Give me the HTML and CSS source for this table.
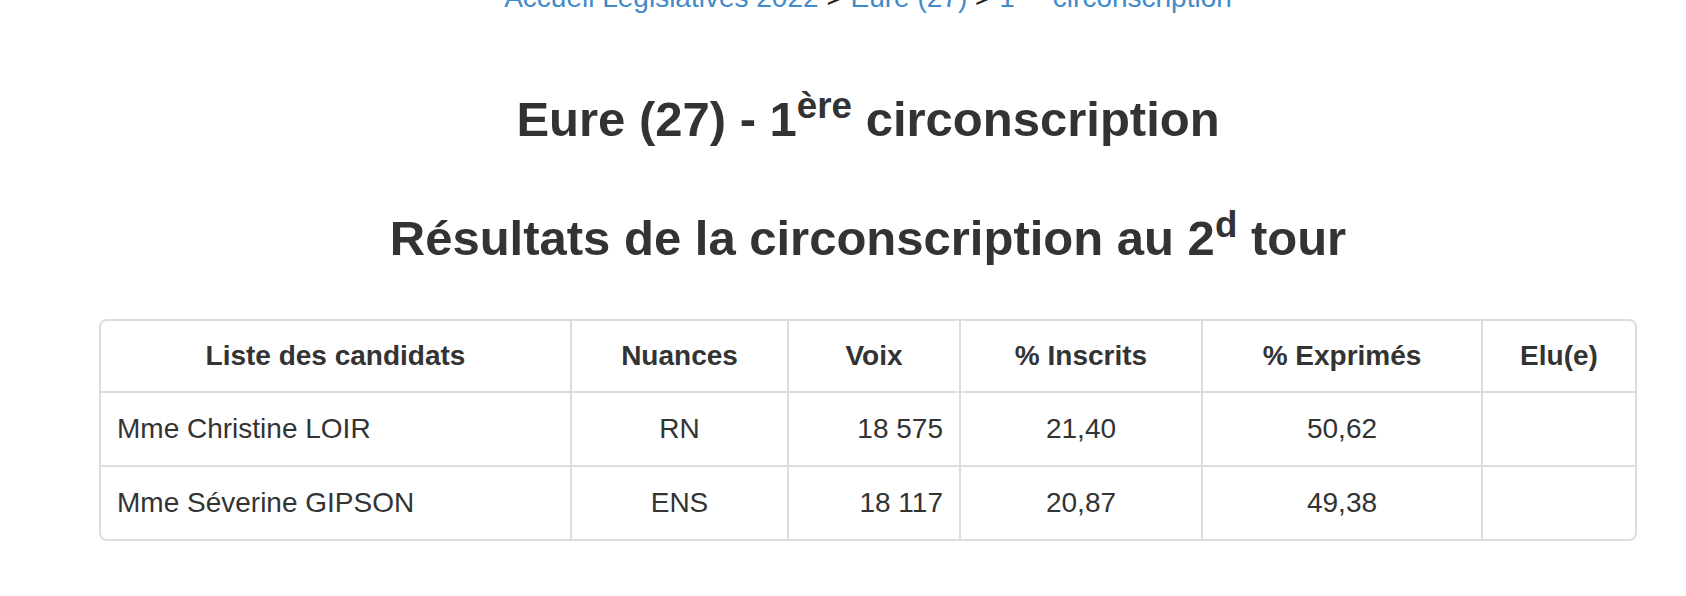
FILE: index.html
```html
<!DOCTYPE html>
<html lang="fr">
<head>
<meta charset="utf-8">
<title>Eure (27) - 1ère circonscription</title>
<link rel="stylesheet" href="styles.css">
</head>
<body>
<div class="page">
  <div class="breadcrumb">
    <a href="#">Accueil Législatives 2022</a>
    <span class="sep">&gt;</span>
    <a href="#">Eure (27)</a>
    <span class="sep">&gt;</span>
    <a href="#">1<sup>ère</sup> circonscription</a>
  </div>
  <h3 class="title">Eure (27) - 1<sup>ère</sup> circonscription</h3>
  <h2 class="subtitle">Résultats de la circonscription au 2<sup>d</sup> tour</h2>
  <div class="table-wrap">
    <table class="results">
      <colgroup>
        <col class="c-name">
        <col class="c-nuance">
        <col class="c-voix">
        <col class="c-ins">
        <col class="c-exp">
        <col class="c-elu">
      </colgroup>
      <thead>
        <tr>
          <th>Liste des candidats</th>
          <th>Nuances</th>
          <th>Voix</th>
          <th>% Inscrits</th>
          <th>% Exprimés</th>
          <th>Elu(e)</th>
        </tr>
      </thead>
      <tbody>
        <tr>
          <td class="left">Mme Christine LOIR</td>
          <td class="center">RN</td>
          <td class="right">18 575</td>
          <td class="center">21,40</td>
          <td class="center">50,62</td>
          <td class="center"></td>
        </tr>
        <tr>
          <td class="left">Mme Séverine GIPSON</td>
          <td class="center">ENS</td>
          <td class="right">18 117</td>
          <td class="center">20,87</td>
          <td class="center">49,38</td>
          <td class="center"></td>
        </tr>
      </tbody>
    </table>
  </div>
</div>
</body>
</html>
```
FILE: styles.css
```css
html, body {
  margin: 0;
  padding: 0;
  background: #fff;
}
body {
  font-family: "Liberation Sans", Arial, Helvetica, sans-serif;
  font-size: 28px;
  line-height: 40px;
  color: #333;
  overflow: hidden;
}
.page {
  display: flex;
  flex-direction: column;
  padding: 0 49px 0 99px;
}
sup {
  font-size: 75%;
  line-height: 0;
  position: relative;
  vertical-align: baseline;
  top: -0.5em;
}
.breadcrumb {
  margin-top: -22px;
  text-align: center;
  white-space: nowrap;
}
.breadcrumb a {
  color: #428bca;
  text-decoration: none;
}
.breadcrumb .sep {
  color: #222;
}
.title, .subtitle {
  font-weight: bold;
  font-size: 49px;
  line-height: 1.1;
  text-align: center;
  margin: 0;
}
.title {
  margin-top: 75px;
}
.subtitle {
  margin-top: 65px;
}
.table-wrap {
  margin-top: 53px;
  border: 2px solid #ddd;
  border-radius: 8px;
  overflow: hidden;
}
.results {
  width: 100%;
  border-collapse: separate;
  border-spacing: 0;
  table-layout: fixed;
}
.c-name { width: 471px; }
.c-nuance { width: 217px; }
.c-voix { width: 172px; }
.c-ins { width: 242px; }
.c-exp { width: 280px; }
.c-elu { width: auto; }
.results th,
.results td {
  padding: 16px;
  line-height: 40px;
  border-right: 2px solid #ddd;
  border-bottom: 2px solid #ddd;
  vertical-align: middle;
}
.results th {
  font-weight: bold;
  text-align: center;
  padding-top: 15px;
  padding-bottom: 15px;
}
.results tr > :last-child {
  border-right: none;
}
.results tbody tr:last-child td {
  border-bottom: none;
}
.left { text-align: left; }
.center { text-align: center; }
.right { text-align: right; }
```
